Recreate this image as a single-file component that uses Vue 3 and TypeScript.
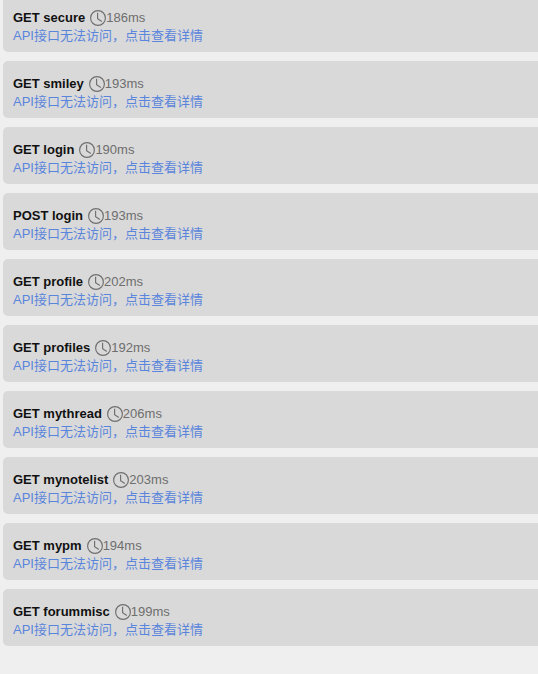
<script setup lang="ts">
const rows: { name: string; time: number }[] = [
  { name: 'GET secure', time: 186 },
  { name: 'GET smiley', time: 193 },
  { name: 'GET login', time: 190 },
  { name: 'POST login', time: 193 },
  { name: 'GET profile', time: 202 },
  { name: 'GET profiles', time: 192 },
  { name: 'GET mythread', time: 206 },
  { name: 'GET mynotelist', time: 203 },
  { name: 'GET mypm', time: 194 },
  { name: 'GET forummisc', time: 199 },
]
</script>

<template>
  <div class="page">
    <div v-for="row in rows" :key="row.name" class="card">
      <div class="head">
        <span class="name">{{ row.name }}</span>
        <svg class="clock" viewBox="0 0 16 16" width="16" height="16" fill="none">
          <circle cx="8" cy="8" r="7.4" stroke="#6f6f6f" stroke-width="1.15" />
          <path d="M7.6 2.8V8.8L11.8 11.4" stroke="#6f6f6f" stroke-width="1.15" />
        </svg>
        <span class="time">{{ row.time }}ms</span>
      </div>
      <a class="link">API接口无法访问，点击查看详情</a>
    </div>
  </div>
</template>

<style scoped>
.page {
  box-sizing: border-box;
  height: 674px;
  overflow: hidden;
  padding: 0 0 0 3px;
  background: #efefef;
  font-family: "Liberation Sans", "Noto Sans CJK SC", sans-serif;
  font-size: 13px;
}
.card {
  box-sizing: border-box;
  height: 57px;
  margin-bottom: 9px;
  padding: 14px 10px 0;
  background: #d9d9d9;
  border-radius: 5px 0 0 5px;
  line-height: 18px;
}
.card:first-child {
  margin-top: -5px;
}
.head {
  display: flex;
  align-items: center;
  height: 18px;
}
.name {
  font-weight: 700;
  color: #111;
}
.clock {
  margin-left: 5px;
  flex: none;
}
.time {
  color: #6e6e6e;
}
.link {
  display: block;
  color: #5a85dc;
}
</style>
<style>
html, body { margin: 0; background: #efefef; }
</style>
